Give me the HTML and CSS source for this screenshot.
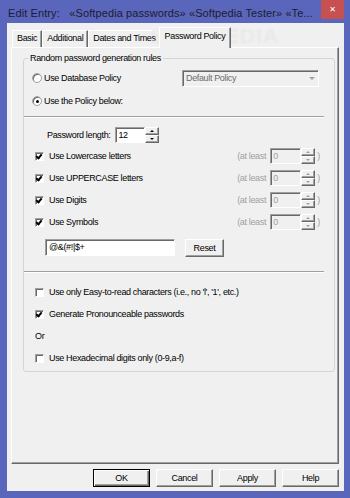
FILE: index.html
```html
<!DOCTYPE html>
<html lang="en">
<head>
  <meta charset="UTF-8" />
  <title>Edit Entry</title>
  <link rel="stylesheet" href="styles.css">
</head>
<body>
  <div class="window">
    <div class="titlebar">
      <span class="title">Edit Entry:   «Softpedia passwords» «Softpedia Tester» «Te...</span>
      <span class="close">&#x2715;</span>
    </div>
    <div class="client">
      <div class="tabs">
        <div class="tab">Basic</div>
        <div class="tab">Additional</div>
        <div class="tab">Dates and Times</div>
        <div class="tab active">Password Policy</div>
      </div>
      <div class="panel">
        <fieldset class="group">
          <legend>Random password generation rules</legend>
          <div class="opt first">
            <span class="radio"></span>Use Database Policy
            <span class="select">Default Policy<span class="drop"></span></span>
          </div>
          <div class="opt second">
            <span class="radio on"></span>Use the Policy below:
          </div>
          <div class="sep"></div>
          <div class="len">
            <span>Password length:</span>
            <span class="field num">12</span>
            <span class="spin"><span class="up"></span><span class="down"></span></span>
          </div>
          <div class="chk first">
            <span class="box on"></span>Use Lowercase letters
            <span class="least">(at least <span class="field off">0</span><span class="spin off"><span class="up"></span><span class="down"></span></span> )</span>
          </div>
          <div class="chk">
            <span class="box on"></span>Use UPPERCASE letters
            <span class="least">(at least <span class="field off">0</span><span class="spin off"><span class="up"></span><span class="down"></span></span> )</span>
          </div>
          <div class="chk">
            <span class="box on"></span>Use Digits
            <span class="least">(at least <span class="field off">0</span><span class="spin off"><span class="up"></span><span class="down"></span></span> )</span>
          </div>
          <div class="chk">
            <span class="box on"></span>Use Symbols
            <span class="least">(at least <span class="field off">0</span><span class="spin off"><span class="up"></span><span class="down"></span></span> )</span>
          </div>
          <div class="sym">
            <span class="field symbols">@&amp;(#!|$+</span>
            <span class="btn reset">Reset</span>
          </div>
          <div class="sep lower"></div>
          <div class="chk after-sep">
            <span class="box"></span>Use only Easy-to-read characters (i.e., no 'l', '1', etc.)
          </div>
          <div class="chk">
            <span class="box on"></span>Generate Pronounceable passwords
          </div>
          <div class="chk">Or</div>
          <div class="chk">
            <span class="box"></span>Use Hexadecimal digits only (0-9,a-f)
          </div>
        </fieldset>
      </div>
      <div class="buttons">
        <span class="btn default">OK</span>
        <span class="btn">Cancel</span>
        <span class="btn">Apply</span>
        <span class="btn">Help</span>
      </div>
    </div>
    <span class="watermark">SOFTPEDIA</span>
  </div>
</body>
</html>
```

FILE: styles.css
```css
body {
  margin: 0;
  background: #5a66bb;
  font-family: "Liberation Sans", Arial, sans-serif;
  font-size: 9px;
  letter-spacing: -0.35px;
  color: #000;
}
.window {
  position: relative;
  width: 350px;
  height: 498px;
  background: #5a66bb;
  display: flex;
  flex-direction: column;
  overflow: hidden;
}
.titlebar {
  height: 23px;
  flex: none;
  display: flex;
  align-items: flex-start;
}
.title {
  flex: 1;
  padding: 6px 0 0 8px;
  font-size: 11px;
  line-height: 14px;
  letter-spacing: 0.1px;
  color: #1c1c30;
  white-space: pre;
  overflow: hidden;
}
.close {
  width: 23px;
  height: 19px;
  margin-right: 6px;
  background: #c75050;
  color: #fff;
  font-family: "DejaVu Sans", sans-serif;
  font-size: 8px;
  letter-spacing: 0;
  display: flex;
  align-items: center;
  justify-content: center;
}
.client {
  flex: 1;
  margin: 0 6px 7px 7px;
  background: #f0f0f0;
  display: flex;
  flex-direction: column;
}
.tabs {
  height: 24px;
  flex: none;
  display: flex;
  align-items: flex-end;
  padding-left: 5px;
}
.tab {
  height: 17px;
  box-sizing: border-box;
  padding: 0 4px;
  line-height: 15px;
  border: 1px solid;
  border-color: #fff #696969 transparent #fff;
  border-bottom: none;
  box-shadow: inset -1px 0 #a0a0a0;
}
.tab.active {
  position: relative;
  z-index: 1;
  height: 21px;
  margin: 0 -2px -1px -2px;
  padding: 0 5px;
  line-height: 16px;
  background: #f0f0f0;
}
.panel {
  height: 417px;
  flex: none;
  margin: 0 5px 0 4px;
  box-sizing: border-box;
  border: 1px solid;
  border-color: #fff #696969 #696969 #fff;
  box-shadow: inset -1px -1px #a0a0a0;
  display: flex;
  flex-direction: column;
}
.group {
  min-width: 0;
  margin: 4px 3px 0 11px;
  padding: 0 0 2px 0;
  border: 1px solid #d5d5d5;
  border-radius: 3px;
}
.group legend {
  margin-left: 4px;
  padding: 0 2px;
  line-height: 12px;
}
.opt, .chk, .len, .sym {
  display: flex;
  align-items: center;
  white-space: nowrap;
}
.opt {
  height: 22px;
  padding-left: 8px;
}
.opt.first {
  margin-top: 3px;
}
.opt.second {
  margin-top: 1px;
}
.radio {
  width: 10px;
  height: 10px;
  box-sizing: border-box;
  margin-right: 2px;
  border-radius: 50%;
  border: 1px solid #a0a0a0;
  box-shadow: inset 1px 1px #696969;
  background: #fff;
  display: flex;
  align-items: center;
  justify-content: center;
}
.radio.on::after {
  content: "";
  width: 3px;
  height: 3px;
  border-radius: 50%;
  background: #000;
}
.select {
  width: 137px;
  height: 17px;
  box-sizing: border-box;
  margin: 0 15px 0 auto;
  padding-left: 3px;
  border: 1px solid;
  border-color: #a0a0a0 #fff #fff #a0a0a0;
  box-shadow: inset 1px 1px #696969;
  color: #6d6d6d;
  line-height: 14px;
  display: flex;
  justify-content: space-between;
}
.drop {
  width: 12px;
  display: flex;
  align-items: center;
  justify-content: center;
}
.drop::after {
  content: "";
  border: 3px solid transparent;
  border-top: 3px solid #a0a0a0;
  border-bottom: 0;
}
.sep {
  margin: 4px 10px 0 0;
  border-top: 1px solid #a0a0a0;
  border-bottom: 1px solid #fff;
}
.sep.lower {
  margin-top: 14px;
}
.len {
  height: 18px;
  margin-top: 8px;
  padding-left: 23px;
}
.len .field {
  margin-left: 5px;
}
.field {
  height: 16px;
  box-sizing: border-box;
  padding: 0 2px;
  border: 1px solid;
  border-color: #a0a0a0 #fff #fff #a0a0a0;
  box-shadow: inset 1px 1px #696969;
  background: #fff;
  line-height: 14px;
}
.field.num {
  width: 30px;
}
.field.off {
  width: 31px;
  background: #f0f0f0;
  color: #a0a0a0;
}
.spin {
  width: 14px;
  height: 16px;
  display: flex;
  flex-direction: column;
}
.spin span {
  flex: 1;
  border: 1px solid;
  border-color: #fff #696969 #696969 #fff;
  box-shadow: inset -1px -1px #a0a0a0;
  background: #f0f0f0;
  display: flex;
  align-items: center;
  justify-content: center;
}
.spin .up::after {
  content: "";
  border: 2px solid transparent;
  border-bottom: 2px solid #000;
  border-top: 0;
}
.spin .down::after {
  content: "";
  border: 2px solid transparent;
  border-top: 2px solid #000;
  border-bottom: 0;
}
.spin.off .up::after {
  border-bottom-color: #a0a0a0;
}
.spin.off .down::after {
  border-top-color: #a0a0a0;
}
.chk {
  height: 22px;
  padding-left: 11px;
}
.chk.first {
  margin-top: 1px;
}
.chk.after-sep {
  margin-top: 8px;
}
.box {
  width: 9px;
  height: 9px;
  box-sizing: border-box;
  margin-right: 5px;
  border: 1px solid;
  border-color: #a0a0a0 #fff #fff #a0a0a0;
  box-shadow: inset 1px 1px #696969;
  background: #fff;
  position: relative;
}
.box.on::after {
  content: "";
  position: absolute;
  left: 1px;
  top: 0;
  width: 2px;
  height: 4px;
  border: solid #000;
  border-width: 0 2px 2px 0;
  transform: rotate(40deg);
}
.least {
  margin: 0 14px 0 auto;
  color: #a0a0a0;
  display: flex;
  align-items: center;
  white-space: pre;
}
.least .field {
  margin-left: 2px;
}
.sym {
  height: 18px;
  margin-top: 6px;
  padding-left: 21px;
  align-items: flex-start;
}
.field.symbols {
  width: 130px;
  height: 17px;
  padding-left: 3px;
}
.btn {
  height: 18px;
  box-sizing: border-box;
  border: 1px solid;
  border-color: #fff #696969 #696969 #fff;
  box-shadow: inset -1px -1px #a0a0a0;
  background: #f0f0f0;
  display: flex;
  align-items: center;
  justify-content: center;
}
.btn.reset {
  width: 39px;
  margin-left: 10px;
}
.buttons {
  display: flex;
  justify-content: flex-end;
  gap: 6px;
  margin-top: 5px;
  padding-right: 5px;
}
.buttons .btn {
  width: 57px;
}
.btn.default {
  border-color: #000;
  box-shadow: inset 1px 1px #fff, inset -1px -1px #696969, inset -2px -2px #a0a0a0;
}
.watermark {
  position: absolute;
  left: 150px;
  top: 24px;
  font-size: 21px;
  font-weight: bold;
  letter-spacing: 1px;
  color: rgba(255, 255, 255, 0.4);
  text-shadow: 0 0 1px rgba(0, 0, 0, 0.08);
  pointer-events: none;
}
```
